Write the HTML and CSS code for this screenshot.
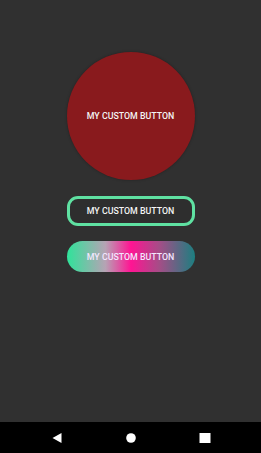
FILE: index.html
```html
<!DOCTYPE html>
<html lang="en">
<head>
    <meta charset="UTF-8">
    <meta name="viewport" content="width=device-width, initial-scale=1.0">
    <title>Custom Buttons</title>
    <link rel="stylesheet" href="styles.css">
</head>
<body>
    <div class="screen">
        <div class="content">
            <button class="btn btn-round">MY CUSTOM BUTTON</button>
            <button class="btn btn-outline">MY CUSTOM BUTTON</button>
            <button class="btn btn-gradient">MY CUSTOM BUTTON</button>
        </div>
        <div class="navbar">
            <svg class="nav-icon" width="12" height="12" viewBox="0 0 12 12">
                <polygon points="10.5,1 10.5,11 1.5,6" fill="#fff"/>
            </svg>
            <svg class="nav-icon" width="12" height="12" viewBox="0 0 12 12">
                <circle cx="6" cy="6" r="4.8" fill="#fff"/>
            </svg>
            <svg class="nav-icon" width="12" height="12" viewBox="0 0 12 12">
                <rect x="0.5" y="1" width="11" height="10" fill="#fff"/>
            </svg>
        </div>
    </div>
</body>
</html>
```

FILE: styles.css
```css
body {
    margin: 0;
    background: #303030;
    font-family: Roboto, "Liberation Sans", sans-serif;
}

.screen {
    display: flex;
    flex-direction: column;
    width: 261px;
    height: 453px;
}

.content {
    flex: 1;
    display: flex;
    flex-direction: column;
    align-items: center;
    padding-top: 52px;
}

.btn {
    width: 128px;
    font-family: Roboto, "Liberation Sans", sans-serif;
    font-size: 8.8px;
    font-weight: 500;
    color: #f4f4f4;
    border: none;
    padding: 0;
    cursor: pointer;
}

.btn-round {
    height: 128px;
    border-radius: 50%;
    background: #891a1d;
    box-shadow: 0 0 3px rgba(0, 0, 0, 0.3);
}

.btn-outline {
    margin-top: 16px;
    height: 30px;
    border: 3px solid #5fe1a2;
    border-radius: 11px;
    background: #2e2e2e;
}

.btn-gradient {
    margin-top: 15px;
    height: 31px;
    border-radius: 16px;
    color: #f3e6ff;
    background: linear-gradient(90deg, #2fe39a 0%, #b6a3b4 30%, #ff1493 50%, #a54d87 72%, #1c7f80 100%);
}

.navbar {
    height: 31px;
    background: #000;
    display: flex;
    align-items: center;
    justify-content: center;
    gap: 62px;
}

.nav-icon {
    display: block;
}
```
